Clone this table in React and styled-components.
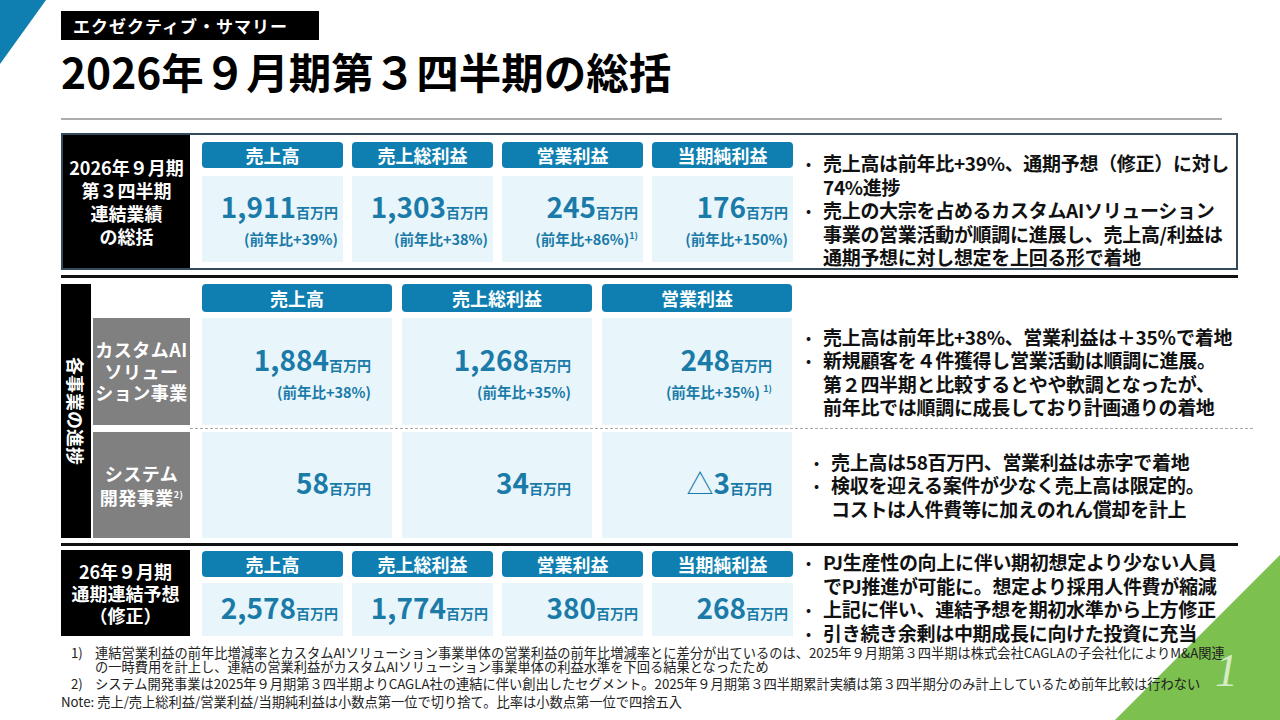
import React from "react";
import styled, { createGlobalStyle } from "styled-components";

const BLUE = "#0f7fb1";
const VALUE = "#1a7aa8";
const BOX = "#e8f5fa";
const FONT = `"Noto Sans CJK JP", "Noto Sans", sans-serif`;

const Global = createGlobalStyle`
  html, body { margin: 0; padding: 0; background: #fff; }
  body { font-family: ${FONT}; color: #111; }
  #root { width: 1280px; height: 720px; }
  * { box-sizing: border-box; }
`;

const Slide = styled.div`
  position: relative;
  width: 1280px;
  height: 720px;
  overflow: hidden;
  background: #fff;
`;

const CornerBlue = styled.div`
  position: absolute;
  left: 0;
  top: 0;
  width: 46px;
  height: 64px;
  background: ${BLUE};
  clip-path: polygon(0 0, 100% 0, 0 100%);
`;

const CornerGreen = styled.div`
  position: absolute;
  right: 0;
  bottom: 0;
  width: 165px;
  height: 165px;
  background: #7cc04f;
  clip-path: polygon(100% 0, 100% 100%, 0 100%);
`;

const PageNum = styled.div`
  position: absolute;
  right: 42px;
  bottom: 26px;
  z-index: 2;
  font-family: "Liberation Serif", serif;
  font-style: italic;
  font-size: 46px;
  line-height: 1;
  color: #d5ecc6;
`;

const Content = styled.div`
  position: relative;
  z-index: 1;
  width: 1238px;
  padding: 11px 0 0 61px;
  display: flex;
  flex-direction: column;
`;

const Tag = styled.div`
  align-self: flex-start;
  width: 258px;
  height: 29px;
  background: #000;
  color: #fff;
  font-size: 17px;
  font-weight: 700;
  letter-spacing: 1px;
  display: flex;
  align-items: center;
  padding-left: 12px;
`;

const Title = styled.h1`
  margin: 6px 0 0;
  font-size: 42.5px;
  font-weight: 700;
  line-height: 50px;
  color: #000;
`;

const Rule = styled.div`
  margin-top: 22px;
  width: 1161px;
  height: 2px;
  background: #adadad;
`;

const ThickRule = styled.div`
  margin-top: 5px;
  height: 3px;
  background: #111;
`;

const Summary = styled.div`
  margin-top: 13px;
  height: 137px;
  border: 2px solid #34495a;
  display: flex;
`;

const BlackLabel = styled.div`
  width: ${(p) => p.$w}px;
  flex-shrink: 0;
  background: #000;
  color: #fff;
  font-size: 18px;
  font-weight: 700;
  line-height: ${(p) => p.$lh}px;
  text-align: center;
  display: flex;
  align-items: center;
  justify-content: center;
`;

const MetricGrid = styled.div`
  margin-left: 12px;
  padding: ${(p) => p.$pad};
  display: grid;
  grid-template-columns: repeat(4, 141px);
  grid-template-rows: 26px 1fr;
  column-gap: 9px;
  row-gap: ${(p) => p.$rowGap}px;
  flex-shrink: 0;
`;

const Header = styled.div`
  background: ${BLUE};
  border-radius: 4px;
  color: #fff;
  font-size: 18px;
  font-weight: 700;
  line-height: 1;
  display: flex;
  align-items: center;
  justify-content: center;
`;

const ValueBox = styled.div`
  background: ${BOX};
  display: flex;
  flex-direction: column;
  justify-content: center;
  align-items: flex-end;
  padding-right: ${(p) => p.$pr}px;
  color: ${VALUE};
  white-space: nowrap;
`;

const Num = styled.div`
  font-size: 28px;
  font-weight: 700;
  line-height: 34px;
`;

const Unit = styled.span`
  font-size: 14px;
  font-weight: 700;
`;

const Tri = styled.span`
  font-weight: 400;
  font-size: 27px;
`;

const Yoy = styled.div`
  font-size: 14.5px;
  font-weight: 700;
  line-height: 20px;
`;

const Sup = styled.span`
  font-size: 9px;
  vertical-align: super;
  line-height: 0;
`;

const Bullets = styled.ul`
  list-style: none;
  margin: 0;
  padding: ${(p) => p.$pt}px 0 0 ${(p) => p.$pl}px;
  font-size: 19px;
  font-weight: 700;
  line-height: 23.5px;
  letter-spacing: -0.3px;
  white-space: nowrap;
  color: #111;
  align-self: ${(p) => (p.$center ? "center" : "flex-start")};
`;

const Item = styled.li`
  position: relative;
  padding-left: 17px;
  &::before {
    content: "•";
    position: absolute;
    left: 0;
    top: 0;
    font-weight: 400;
    font-size: 15px;
  }
`;

const Segments = styled.div`
  margin-top: 6px;
  height: 254px;
  display: flex;
`;

const VLabel = styled.div`
  width: 30px;
  flex-shrink: 0;
  background: #000;
  color: #fff;
  display: flex;
  align-items: center;
  justify-content: center;
`;

const VText = styled.span`
  writing-mode: vertical-rl;
  text-orientation: sideways;
  font-size: 18px;
  font-weight: 700;
  line-height: 1;
`;

const SegBody = styled.div`
  margin-left: 2px;
  flex: 1;
  display: flex;
  flex-direction: column;
`;

const SegHeaderRow = styled.div`
  height: 28px;
  display: flex;
  gap: 10px;
  padding-left: 109px;
`;

const SegHeader = styled(Header)`
  width: 190px;
`;

const SegRow = styled.div`
  display: flex;
  height: ${(p) => p.$h}px;
  margin-top: ${(p) => p.$mt || 0}px;
`;

const SegLabel = styled.div`
  width: 97px;
  flex-shrink: 0;
  margin-right: 12px;
  background: #808080;
  color: #fff;
  font-size: 18px;
  font-weight: 700;
  line-height: ${(p) => p.$lh}px;
  letter-spacing: 0.5px;
  text-align: center;
  display: flex;
  align-items: center;
  justify-content: center;
`;

const SegValues = styled.div`
  display: grid;
  grid-template-columns: repeat(3, 190px);
  column-gap: 10px;
  flex-shrink: 0;
`;

const Divider = styled.div`
  height: 0;
  border-top: 1px dashed #a8a8a8;
  margin: 3px -15px 3px 97px;
`;

const Forecast = styled.div`
  margin-top: 4px;
  height: 86px;
  display: flex;
`;

const Notes = styled.div`
  margin-top: 10px;
  font-size: 13.25px;
  line-height: 13.5px;
  color: #222;
  white-space: nowrap;
`;

const NoteItem = styled.div`
  display: flex;
  margin-top: ${(p) => (p.$first ? 0 : 4)}px;
`;

const Marker = styled.span`
  flex-shrink: 0;
  width: 34px;
  padding-left: 10px;
`;

const summary = [
  { h: "売上高", n: "1,911", y: "(前年比+39%)" },
  { h: "売上総利益", n: "1,303", y: "(前年比+38%)" },
  { h: "営業利益", n: "245", y: "(前年比+86%)", sup: "1)" },
  { h: "当期純利益", n: "176", y: "(前年比+150%)" },
];

const forecast = [
  { h: "売上高", n: "2,578" },
  { h: "売上総利益", n: "1,774" },
  { h: "営業利益", n: "380" },
  { h: "当期純利益", n: "268" },
];

export default function App() {
  return (
    <>
      <Global />
      <Slide>
        <CornerBlue />
        <CornerGreen />
        <PageNum>1</PageNum>
        <Content>
          <Tag>エクゼクティブ・サマリー</Tag>
          <Title>2026年９月期第３四半期の総括</Title>
          <Rule />

          <Summary>
            <BlackLabel $w={127} $lh={23}>
              <div>
                2026年９月期
                <br />
                第３四半期
                <br />
                連結業績
                <br />
                の総括
              </div>
            </BlackLabel>
            <MetricGrid $pad="7px 0 6px" $rowGap={8}>
              {summary.map((m) => (
                <Header key={m.h}>{m.h}</Header>
              ))}
              {summary.map((m) => (
                <ValueBox key={m.h} $pr={5}>
                  <Num>
                    {m.n}
                    <Unit>百万円</Unit>
                  </Num>
                  <Yoy>
                    {m.y}
                    {m.sup && <Sup>{m.sup}</Sup>}
                  </Yoy>
                </ValueBox>
              ))}
            </MetricGrid>
            <Bullets $pt={16} $pl={13}>
              <Item>
                売上高は前年比+39%、通期予想（修正）に対し
                <br />
                74%進捗
              </Item>
              <Item>
                売上の大宗を占めるカスタムAIソリューション
                <br />
                事業の営業活動が順調に進展し、売上高/利益は
                <br />
                通期予想に対し想定を上回る形で着地
              </Item>
            </Bullets>
          </Summary>

          <ThickRule />

          <Segments>
            <VLabel>
              <VText>各事業の進捗</VText>
            </VLabel>
            <SegBody>
              <SegHeaderRow>
                <SegHeader>売上高</SegHeader>
                <SegHeader>売上総利益</SegHeader>
                <SegHeader>営業利益</SegHeader>
              </SegHeaderRow>
              <SegRow $h={107} $mt={6}>
                <SegLabel $lh={21.5}>
                  <div>
                    カスタムAI
                    <br />
                    ソリュー
                    <br />
                    ション事業
                  </div>
                </SegLabel>
                <SegValues>
                  <ValueBox $pr={21}>
                    <Num>
                      1,884<Unit>百万円</Unit>
                    </Num>
                    <Yoy>(前年比+38%)</Yoy>
                  </ValueBox>
                  <ValueBox $pr={21}>
                    <Num>
                      1,268<Unit>百万円</Unit>
                    </Num>
                    <Yoy>(前年比+35%)</Yoy>
                  </ValueBox>
                  <ValueBox $pr={20}>
                    <Num>
                      248<Unit>百万円</Unit>
                    </Num>
                    <Yoy>
                      (前年比+35%) <Sup>1)</Sup>
                    </Yoy>
                  </ValueBox>
                </SegValues>
                <Bullets $pt={0} $pl={14} $center>
                  <Item>売上高は前年比+38%、営業利益は＋35％で着地</Item>
                  <Item>
                    新規顧客を４件獲得し営業活動は順調に進展。
                    <br />
                    第２四半期と比較するとやや軟調となったが、
                    <br />
                    前年比では順調に成長しており計画通りの着地
                  </Item>
                </Bullets>
              </SegRow>
              <Divider />
              <SegRow $h={106}>
                <SegLabel $lh={24}>
                  <div>
                    システム
                    <br />
                    開発事業<Sup>2)</Sup>
                  </div>
                </SegLabel>
                <SegValues>
                  <ValueBox $pr={21}>
                    <Num>
                      58<Unit>百万円</Unit>
                    </Num>
                  </ValueBox>
                  <ValueBox $pr={21}>
                    <Num>
                      34<Unit>百万円</Unit>
                    </Num>
                  </ValueBox>
                  <ValueBox $pr={20}>
                    <Num>
                      <Tri>△</Tri>3<Unit>百万円</Unit>
                    </Num>
                  </ValueBox>
                </SegValues>
                <Bullets $pt={0} $pl={22} $center>
                  <Item>売上高は58百万円、営業利益は赤字で着地</Item>
                  <Item>
                    検収を迎える案件が少なく売上高は限定的。
                    <br />
                    コストは人件費等に加えのれん償却を計上
                  </Item>
                </Bullets>
              </SegRow>
            </SegBody>
          </Segments>

          <ThickRule />

          <Forecast>
            <BlackLabel $w={129} $lh={22}>
              <div>
                26年９月期
                <br />
                通期連結予想
                <br />
                （修正）
              </div>
            </BlackLabel>
            <MetricGrid $pad="1px 0 0" $rowGap={6}>
              {forecast.map((m) => (
                <Header key={m.h}>{m.h}</Header>
              ))}
              {forecast.map((m) => (
                <ValueBox key={m.h} $pr={5}>
                  <Num>
                    {m.n}
                    <Unit>百万円</Unit>
                  </Num>
                </ValueBox>
              ))}
            </MetricGrid>
            <Bullets $pt={0} $pl={13}>
              <Item>
                PJ生産性の向上に伴い期初想定より少ない人員
                <br />
                でPJ推進が可能に。想定より採用人件費が縮減
              </Item>
              <Item>上記に伴い、連結予想を期初水準から上方修正</Item>
              <Item>引き続き余剰は中期成長に向けた投資に充当</Item>
            </Bullets>
          </Forecast>

          <Notes>
            <NoteItem $first>
              <Marker>1)</Marker>
              <div>
                連結営業利益の前年比増減率とカスタムAIソリューション事業単体の営業利益の前年比増減率とに差分が出ているのは、2025年９月期第３四半期は株式会社CAGLAの子会社化によりM&A関連
                <br />
                の一時費用を計上し、連結の営業利益がカスタムAIソリューション事業単体の利益水準を下回る結果となったため
              </div>
            </NoteItem>
            <NoteItem>
              <Marker>2)</Marker>
              <div>
                システム開発事業は2025年９月期第３四半期よりCAGLA社の連結に伴い創出したセグメント。2025年９月期第３四半期累計実績は第３四半期分のみ計上しているため前年比較は行わない
              </div>
            </NoteItem>
            <NoteItem>
              <div>Note: 売上/売上総利益/営業利益/当期純利益は小数点第一位で切り捨て。比率は小数点第一位で四捨五入</div>
            </NoteItem>
          </Notes>
        </Content>
      </Slide>
    </>
  );
}
